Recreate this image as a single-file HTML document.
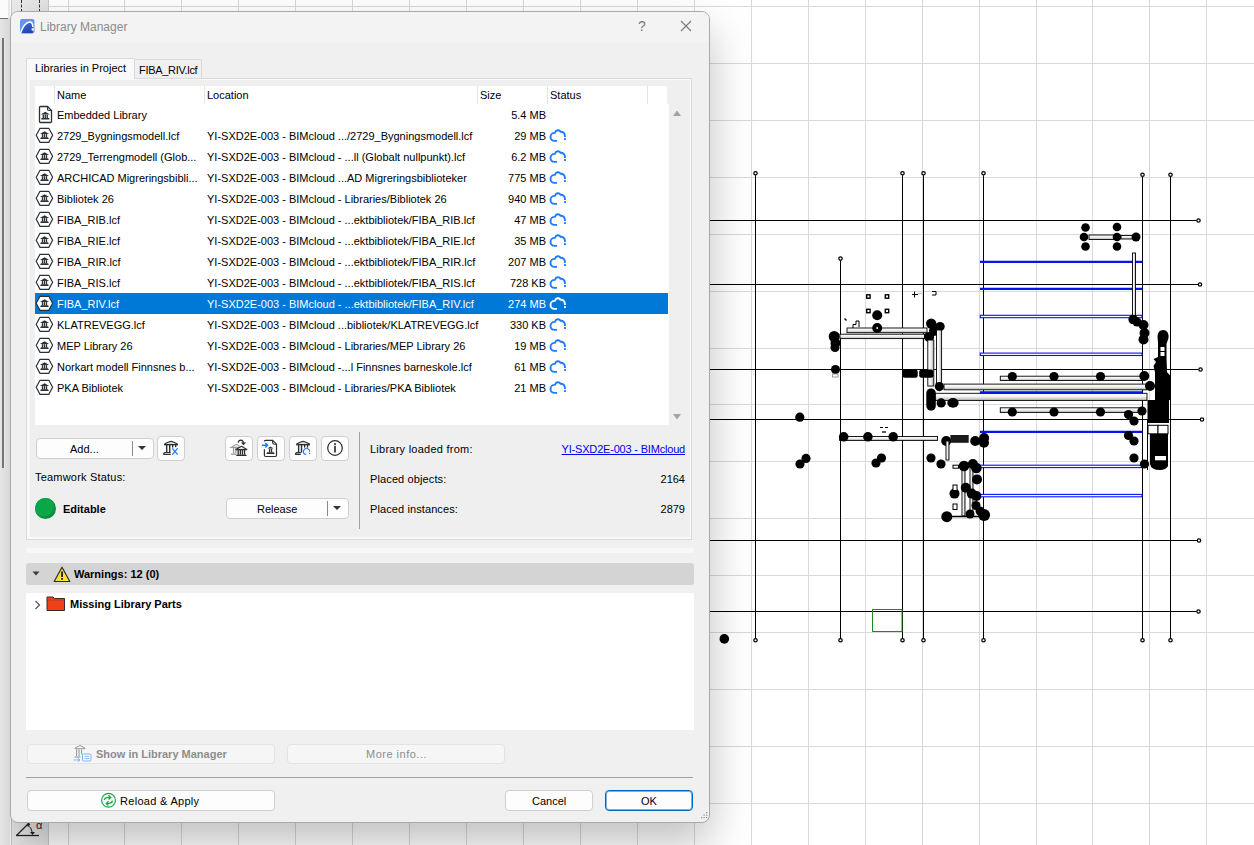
<!DOCTYPE html>
<html><head><meta charset="utf-8"><title>Library Manager</title>
<style>
html,body{margin:0;padding:0;}
body{width:1254px;height:845px;overflow:hidden;position:relative;background:#ffffff;font-family:"Liberation Sans",sans-serif;}
.a{position:absolute;}
.t{position:absolute;white-space:nowrap;font-size:11px;line-height:13px;color:#000;}
.b{font-weight:bold;}
.btn{position:absolute;box-sizing:border-box;border:1px solid #cfcfcf;border-radius:4px;background:#fdfdfd;}
</style></head><body>
<div class="a" style="left:0;top:0;width:10px;height:845px;background:linear-gradient(90deg,#e5e5e5 0,#d8d8d8 10px);z-index:5"></div><div class="a" style="left:2px;top:38px;width:2px;height:430px;background:#747474;box-shadow:1px 0 0 #e8e8e8;z-index:6"></div><div class="a" style="left:0;top:0;width:8px;height:18px;background:#fbfbfb;border-bottom:1px solid #707070;z-index:6"></div><div class="a" style="left:8px;top:0;width:2px;height:18px;background:#e8e8e8;z-index:6"></div><div class="a" style="left:11px;top:0;width:38px;height:845px;box-sizing:border-box;border-left:1px solid #c9c9c9;border-right:1px solid #c9c9c9;background:linear-gradient(90deg,#ececec,#e2e2e2)"></div><div class="a" style="left:21px;top:0;width:0;height:12px;border-left:1px dashed #333"></div><div class="a" style="left:39px;top:0;width:0;height:12px;border-left:1px dashed #333"></div><svg class="a" style="left:14px;top:818px" width="32" height="22" viewBox="0 0 32 22"><path d="M2 17.5 H25" stroke="#1e2328" stroke-width="1.3"/><path d="M2.5 17.5 L16 4" stroke="#1e2328" stroke-width="1.2"/><path d="M13.5 7 Q17.5 9 18.5 15" fill="none" stroke="#1e2328" stroke-width="1"/><path d="M13 5.5 L16.5 6.2 L13.8 9 Z" fill="#1e2328"/><path d="M16 14 H21 L18.5 17 Z" fill="#1e2328"/><text x="22" y="11" font-family="Liberation Sans" font-size="11" fill="#1e2328">&#945;</text></svg><svg class="a" style="left:49px;top:0" width="1205" height="845" viewBox="49 0 1205 845"><line x1="68.5" y1="0" x2="68.5" y2="845" stroke="#d9d9d9" stroke-width="1"/><line x1="124.5" y1="0" x2="124.5" y2="845" stroke="#d9d9d9" stroke-width="1"/><line x1="181.5" y1="0" x2="181.5" y2="845" stroke="#d9d9d9" stroke-width="1"/><line x1="238.5" y1="0" x2="238.5" y2="845" stroke="#d9d9d9" stroke-width="1"/><line x1="295.5" y1="0" x2="295.5" y2="845" stroke="#d9d9d9" stroke-width="1"/><line x1="352.5" y1="0" x2="352.5" y2="845" stroke="#d9d9d9" stroke-width="1"/><line x1="409.5" y1="0" x2="409.5" y2="845" stroke="#d9d9d9" stroke-width="1"/><line x1="466.5" y1="0" x2="466.5" y2="845" stroke="#d9d9d9" stroke-width="1"/><line x1="523.5" y1="0" x2="523.5" y2="845" stroke="#d9d9d9" stroke-width="1"/><line x1="580.5" y1="0" x2="580.5" y2="845" stroke="#d9d9d9" stroke-width="1"/><line x1="637.5" y1="0" x2="637.5" y2="845" stroke="#d9d9d9" stroke-width="1"/><line x1="694.5" y1="0" x2="694.5" y2="845" stroke="#d9d9d9" stroke-width="1"/><line x1="751.5" y1="0" x2="751.5" y2="845" stroke="#d9d9d9" stroke-width="1"/><line x1="808.5" y1="0" x2="808.5" y2="845" stroke="#d9d9d9" stroke-width="1"/><line x1="865.5" y1="0" x2="865.5" y2="845" stroke="#d9d9d9" stroke-width="1"/><line x1="922.5" y1="0" x2="922.5" y2="845" stroke="#d9d9d9" stroke-width="1"/><line x1="979.5" y1="0" x2="979.5" y2="845" stroke="#d9d9d9" stroke-width="1"/><line x1="1036.5" y1="0" x2="1036.5" y2="845" stroke="#d9d9d9" stroke-width="1"/><line x1="1092.5" y1="0" x2="1092.5" y2="845" stroke="#d9d9d9" stroke-width="1"/><line x1="1149.5" y1="0" x2="1149.5" y2="845" stroke="#d9d9d9" stroke-width="1"/><line x1="1206.5" y1="0" x2="1206.5" y2="845" stroke="#d9d9d9" stroke-width="1"/><line x1="49" y1="6.5" x2="1254" y2="6.5" stroke="#d9d9d9" stroke-width="1"/><line x1="49" y1="63.5" x2="1254" y2="63.5" stroke="#d9d9d9" stroke-width="1"/><line x1="49" y1="120.5" x2="1254" y2="120.5" stroke="#d9d9d9" stroke-width="1"/><line x1="49" y1="177.5" x2="1254" y2="177.5" stroke="#d9d9d9" stroke-width="1"/><line x1="49" y1="234.5" x2="1254" y2="234.5" stroke="#d9d9d9" stroke-width="1"/><line x1="49" y1="291.5" x2="1254" y2="291.5" stroke="#d9d9d9" stroke-width="1"/><line x1="49" y1="348.5" x2="1254" y2="348.5" stroke="#d9d9d9" stroke-width="1"/><line x1="49" y1="404.5" x2="1254" y2="404.5" stroke="#d9d9d9" stroke-width="1"/><line x1="49" y1="461.5" x2="1254" y2="461.5" stroke="#d9d9d9" stroke-width="1"/><line x1="49" y1="518.5" x2="1254" y2="518.5" stroke="#d9d9d9" stroke-width="1"/><line x1="49" y1="575.5" x2="1254" y2="575.5" stroke="#d9d9d9" stroke-width="1"/><line x1="49" y1="632.5" x2="1254" y2="632.5" stroke="#d9d9d9" stroke-width="1"/><line x1="49" y1="689.5" x2="1254" y2="689.5" stroke="#d9d9d9" stroke-width="1"/><line x1="49" y1="746.5" x2="1254" y2="746.5" stroke="#d9d9d9" stroke-width="1"/><line x1="49" y1="803.5" x2="1254" y2="803.5" stroke="#d9d9d9" stroke-width="1"/><defs><linearGradient id="wh" x1="0" y1="0" x2="0" y2="1"><stop offset="0" stop-color="#fff"/><stop offset="0.45" stop-color="#f4f4f4"/><stop offset="1" stop-color="#b4b4b4"/></linearGradient><linearGradient id="wv" x1="0" y1="0" x2="1" y2="0"><stop offset="0" stop-color="#fff"/><stop offset="0.45" stop-color="#f4f4f4"/><stop offset="1" stop-color="#b4b4b4"/></linearGradient></defs><line x1="710" y1="220.5" x2="1196.5" y2="220.5" stroke="#000" stroke-width="1.0"/><line x1="710" y1="284.5" x2="1198" y2="284.5" stroke="#000" stroke-width="1.0"/><line x1="710" y1="369.5" x2="1198.5" y2="369.5" stroke="#000" stroke-width="1.0"/><line x1="710" y1="419.5" x2="1200" y2="419.5" stroke="#000" stroke-width="1.0"/><line x1="710" y1="540.5" x2="1197" y2="540.5" stroke="#000" stroke-width="1.0"/><line x1="710" y1="611.5" x2="1196.5" y2="611.5" stroke="#000" stroke-width="1.0"/><line x1="755.5" y1="175.2" x2="755.5" y2="638.2" stroke="#000" stroke-width="1.0"/><line x1="840.5" y1="260.6" x2="840.5" y2="638.2" stroke="#000" stroke-width="1.0"/><line x1="902.5" y1="175.2" x2="902.5" y2="638.2" stroke="#000" stroke-width="1.0"/><line x1="923.5" y1="175.2" x2="923.5" y2="638.2" stroke="#000" stroke-width="1.0"/><line x1="983.5" y1="175.2" x2="983.5" y2="638.2" stroke="#000" stroke-width="1.0"/><line x1="1142.5" y1="176.7" x2="1142.5" y2="638.2" stroke="#000" stroke-width="1.0"/><line x1="1170.5" y1="176.7" x2="1170.5" y2="638.2" stroke="#000" stroke-width="1.0"/><line x1="980" y1="261.8" x2="1142.4" y2="261.8" stroke="#0814f0" stroke-width="2.2"/><line x1="980" y1="288.9" x2="1142.4" y2="288.9" stroke="#0814f0" stroke-width="2.2"/><line x1="980" y1="392.6" x2="1142.4" y2="392.6" stroke="#0814f0" stroke-width="2.2"/><line x1="980" y1="431.9" x2="1142.4" y2="431.9" stroke="#0814f0" stroke-width="2.2"/><rect x="980.3" y="315.3" width="161.70000000000005" height="2.3999999999999773" fill="#fff" stroke="#0814f0" stroke-width="1.1"/><rect x="980.3" y="353.1" width="161.70000000000005" height="2.3999999999999773" fill="#fff" stroke="#0814f0" stroke-width="1.1"/><rect x="980.3" y="465.2" width="161.70000000000005" height="2.3999999999999773" fill="#fff" stroke="#0814f0" stroke-width="1.1"/><rect x="980.3" y="494.40000000000003" width="161.70000000000005" height="2.3999999999999773" fill="#fff" stroke="#0814f0" stroke-width="1.1"/><rect x="872.5" y="609.5" width="29.5" height="22" fill="none" stroke="#1a8a1a" stroke-width="1"/><circle cx="724.3" cy="638.9" r="4.8" fill="#000"/><rect x="1089" y="235" width="25" height="4.5" fill="url(#wh)" stroke="#000" stroke-width="0.9"/><rect x="1121" y="235.5" width="12" height="3.5" fill="url(#wh)" stroke="#000" stroke-width="0.9"/><circle cx="1085.5" cy="227.5" r="4.3" fill="#000"/><circle cx="1084" cy="237" r="4.3" fill="#000"/><circle cx="1085.5" cy="246.5" r="4.3" fill="#000"/><circle cx="1117" cy="227" r="4.3" fill="#000"/><circle cx="1117" cy="237" r="4.3" fill="#000"/><circle cx="1117" cy="246.5" r="4.3" fill="#000"/><circle cx="1136" cy="237" r="4.5" fill="#000"/><rect x="1132.5" y="253" width="3.0" height="63" fill="url(#wv)" stroke="#000" stroke-width="0.9"/><rect x="866.6999999999999" y="294.8" width="3.4" height="3.4" fill="#fff" stroke="#000" stroke-width="1.4"/><rect x="885.3" y="294.8" width="3.4" height="3.4" fill="#fff" stroke="#000" stroke-width="1.4"/><rect x="866.6999999999999" y="309.3" width="3.4" height="3.4" fill="#fff" stroke="#000" stroke-width="1.4"/><rect x="885.3" y="309.3" width="3.4" height="3.4" fill="#fff" stroke="#000" stroke-width="1.4"/><line x1="912" y1="294.5" x2="918" y2="294.5" stroke="#000" stroke-width="1"/><line x1="914.5" y1="291.5" x2="914.5" y2="297.5" stroke="#000" stroke-width="1"/><line x1="918" y1="293.5" x2="922" y2="293.5" stroke="#e88" stroke-width="0.7"/><path d="M932 291.5 H936 V295 H932" fill="none" stroke="#000" stroke-width="1"/><line x1="844.5" y1="318.5" x2="846.5" y2="320.5" stroke="#000" stroke-width="1.2"/><path d="M853 328 V324.5 H856 V321 H859 V327" fill="none" stroke="#000" stroke-width="1"/><rect x="847" y="328" width="80" height="4.699999999999989" fill="url(#wh)" stroke="#000" stroke-width="0.9"/><rect x="840" y="334.2" width="84.5" height="4.400000000000034" fill="url(#wh)" stroke="#000" stroke-width="0.9"/><circle cx="877.2" cy="315.2" r="5" fill="#000"/><circle cx="877.2" cy="328" r="5" fill="#000"/><circle cx="877.2" cy="328" r="0.9" fill="#fff"/><circle cx="834.2" cy="336.5" r="5.5" fill="#000"/><circle cx="835.5" cy="343" r="5" fill="#000"/><circle cx="835" cy="347.5" r="4.5" fill="#000"/><circle cx="835.5" cy="369.5" r="4.5" fill="#000"/><rect x="832.5" y="374" width="5.5" height="3" fill="#fff" stroke="#888" stroke-width="0.8"/><circle cx="931.2" cy="323.6" r="5.2" fill="#000"/><circle cx="940.1" cy="326.6" r="4.6" fill="#000"/><circle cx="929.1" cy="336.9" r="5" fill="#000"/><circle cx="934" cy="331" r="5" fill="#000"/><rect x="927.8" y="340" width="6.0" height="46" fill="url(#wv)" stroke="#000" stroke-width="0.9"/><rect x="936.5" y="330" width="5.100000000000023" height="54" fill="url(#wv)" stroke="#000" stroke-width="0.9"/><rect x="902.5" y="369.5" width="15.200000000000045" height="8.199999999999989" rx="2.5" fill="#000"/><rect x="919.2" y="369.5" width="14.199999999999932" height="8.199999999999989" rx="2.5" fill="#000"/><rect x="1000.3" y="376.2" width="142.70000000000005" height="4.300000000000011" fill="url(#wh)" stroke="#000" stroke-width="0.9"/><rect x="944" y="384.1" width="203" height="5.699999999999989" fill="url(#wh)" stroke="#000" stroke-width="0.9"/><rect x="935" y="393.3" width="212" height="7.099999999999966" fill="url(#wh)" stroke="#000" stroke-width="0.9"/><rect x="1000.3" y="407.8" width="142.70000000000005" height="4.599999999999966" fill="url(#wh)" stroke="#000" stroke-width="0.9"/><circle cx="1012.3" cy="376.5" r="4.6" fill="#000"/><circle cx="1012.3" cy="412" r="4.6" fill="#000"/><circle cx="1054" cy="376.5" r="4.6" fill="#000"/><circle cx="1054" cy="412" r="4.6" fill="#000"/><circle cx="1100.5" cy="376.5" r="4.6" fill="#000"/><circle cx="1100.5" cy="412" r="4.6" fill="#000"/><circle cx="939.4" cy="386.6" r="4.6" fill="#000"/><rect x="926.3" y="388.4" width="9.5" height="22.30000000000001" rx="4.7" fill="#000"/><circle cx="941.2" cy="402.9" r="4.6" fill="#000"/><ellipse cx="953" cy="402.9" rx="5.7" ry="4.8" fill="#000"/><line x1="980" y1="392.6" x2="1142.4" y2="392.6" stroke="#0814f0" stroke-width="2.2"/><circle cx="799.8" cy="417.2" r="4.6" fill="#000"/><circle cx="800" cy="464" r="4.6" fill="#000"/><circle cx="806" cy="458.4" r="4.6" fill="#000"/><rect x="839.6" y="436.5" width="97.89999999999998" height="3.8999999999999773" fill="url(#wh)" stroke="#000" stroke-width="0.9"/><circle cx="843.7" cy="436.8" r="4.8" fill="#000"/><circle cx="867.9" cy="436.8" r="4.8" fill="#000"/><circle cx="893.2" cy="436.8" r="4.8" fill="#000"/><line x1="880" y1="427.5" x2="883" y2="427.5" stroke="#000" stroke-width="1"/><line x1="885" y1="427.5" x2="888" y2="427.5" stroke="#000" stroke-width="1"/><line x1="882" y1="432" x2="886" y2="432" stroke="#000" stroke-width="1.3"/><circle cx="876" cy="463" r="4.6" fill="#000"/><circle cx="881.5" cy="458" r="4.6" fill="#000"/><circle cx="931" cy="458" r="4.6" fill="#000"/><circle cx="941" cy="464" r="4.6" fill="#000"/><circle cx="946.2" cy="441" r="5" fill="#000"/><rect x="950.4" y="435" width="18.300000000000068" height="7.800000000000011" rx="0" fill="#1a1a1a"/><circle cx="975.2" cy="441" r="5" fill="#000"/><circle cx="984.1" cy="438" r="5" fill="#000"/><circle cx="984" cy="442.8" r="5" fill="#000"/><rect x="946" y="441" width="3" height="19" fill="url(#wv)" stroke="#000" stroke-width="0.9"/><rect x="962" y="466" width="3" height="50" fill="url(#wv)" stroke="#000" stroke-width="0.9"/><rect x="970" y="466" width="3" height="50" fill="url(#wv)" stroke="#000" stroke-width="0.9"/><circle cx="964" cy="466" r="5.3" fill="#000"/><circle cx="972.9" cy="464" r="5" fill="#000"/><circle cx="976.4" cy="468" r="5.3" fill="#000"/><circle cx="977" cy="479.4" r="5" fill="#000"/><circle cx="965.8" cy="487.7" r="5" fill="#000"/><circle cx="971.7" cy="493.6" r="5" fill="#000"/><circle cx="976.4" cy="496" r="5" fill="#000"/><circle cx="954.5" cy="493.6" r="5" fill="#000"/><circle cx="976" cy="505.5" r="4.5" fill="#000"/><circle cx="980" cy="511" r="4.5" fill="#000"/><circle cx="946.8" cy="516.7" r="5.5" fill="#000"/><circle cx="984.1" cy="515" r="6" fill="#000"/><circle cx="970" cy="514" r="4.5" fill="#000"/><rect x="953" y="465.2" width="5.5" height="3.0" fill="#fff" stroke="#000" stroke-width="1"/><rect x="953" y="485" width="4" height="5.5" fill="#fff" stroke="#000" stroke-width="1"/><rect x="953" y="504" width="4" height="5.5" fill="#fff" stroke="#000" stroke-width="1"/><line x1="949" y1="516.5" x2="984" y2="516.5" stroke="#000" stroke-width="1.5"/><circle cx="1133.2" cy="319.5" r="4.8" fill="#000"/><circle cx="1137" cy="322" r="4.5" fill="#000"/><circle cx="1143.5" cy="325" r="5" fill="#000"/><circle cx="1144.5" cy="333" r="5" fill="#000"/><circle cx="1143.5" cy="339.5" r="5" fill="#000"/><circle cx="1144.3" cy="376" r="5" fill="#000"/><circle cx="1150" cy="386" r="5" fill="#000"/><circle cx="1142" cy="411" r="4.6" fill="#000"/><path d="M1158 343 L1157.5 336 Q1158 330 1163 330 Q1169 330 1168.5 338 L1166.5 344 V357 L1167 372 L1170.5 376 V400 H1155 V372 L1153.5 366 L1156 362 L1153.5 359 L1158 357 Z" fill="#000"/><rect x="1160.5" y="347" width="4.0" height="4" rx="0" fill="#fff"/><rect x="1160.5" y="352" width="4.0" height="4" rx="0" fill="#fff"/><path d="M1147.5 400 H1169 V423 H1147.5 Z" fill="#000"/><rect x="1148" y="425.3" width="10" height="8.5" fill="#fff" stroke="#000" stroke-width="1"/><rect x="1158" y="425.3" width="10" height="8.5" fill="#fff" stroke="#000" stroke-width="1"/><path d="M1150 434 H1168 V466 Q1166 470 1160 470 Q1151 470 1150 464 Z" fill="#000"/><rect x="1155" y="456" width="11" height="4.300000000000011" rx="0" fill="#fff"/><circle cx="1128.5" cy="414.5" r="4.6" fill="#000"/><circle cx="1134" cy="421" r="4.6" fill="#000"/><circle cx="1128.5" cy="435.5" r="4.6" fill="#000"/><circle cx="1134" cy="441" r="4.6" fill="#000"/><circle cx="1134" cy="458" r="4.6" fill="#000"/><circle cx="1144.5" cy="464" r="4.6" fill="#000"/><line x1="1147.5" y1="420" x2="1147.5" y2="470" stroke="#000" stroke-width="1"/><circle cx="1198.5" cy="220.5" r="1.7" fill="#fff" stroke="#000" stroke-width="1.25"/><circle cx="1200" cy="284.5" r="1.7" fill="#fff" stroke="#000" stroke-width="1.25"/><circle cx="1200.5" cy="369.5" r="1.7" fill="#fff" stroke="#000" stroke-width="1.25"/><circle cx="1202" cy="419.5" r="1.7" fill="#fff" stroke="#000" stroke-width="1.25"/><circle cx="1199" cy="540.5" r="1.7" fill="#fff" stroke="#000" stroke-width="1.25"/><circle cx="1198.5" cy="611.5" r="1.7" fill="#fff" stroke="#000" stroke-width="1.25"/><circle cx="755.5" cy="173.2" r="1.7" fill="#fff" stroke="#000" stroke-width="1.25"/><circle cx="755.5" cy="640.2" r="1.7" fill="#fff" stroke="#000" stroke-width="1.25"/><circle cx="840.5" cy="258.6" r="1.7" fill="#fff" stroke="#000" stroke-width="1.25"/><circle cx="840.5" cy="640.2" r="1.7" fill="#fff" stroke="#000" stroke-width="1.25"/><circle cx="902.5" cy="173.2" r="1.7" fill="#fff" stroke="#000" stroke-width="1.25"/><circle cx="902.5" cy="640.2" r="1.7" fill="#fff" stroke="#000" stroke-width="1.25"/><circle cx="923.5" cy="173.2" r="1.7" fill="#fff" stroke="#000" stroke-width="1.25"/><circle cx="923.5" cy="640.2" r="1.7" fill="#fff" stroke="#000" stroke-width="1.25"/><circle cx="983.5" cy="173.2" r="1.7" fill="#fff" stroke="#000" stroke-width="1.25"/><circle cx="983.5" cy="640.2" r="1.7" fill="#fff" stroke="#000" stroke-width="1.25"/><circle cx="1142.5" cy="174.7" r="1.7" fill="#fff" stroke="#000" stroke-width="1.25"/><circle cx="1142.5" cy="640.2" r="1.7" fill="#fff" stroke="#000" stroke-width="1.25"/><circle cx="1170.5" cy="174.7" r="1.7" fill="#fff" stroke="#000" stroke-width="1.25"/><circle cx="1170.5" cy="640.2" r="1.7" fill="#fff" stroke="#000" stroke-width="1.25"/></svg><div class="a" style="left:10px;top:11px;width:698px;height:810px;border:1px solid #a9a9a9;border-radius:8px;background:#f0f0f0;box-shadow:0 20px 44px rgba(0,0,0,0.25);overflow:hidden"><div class="a" style="left:0;top:0;width:698px;height:30px;background:#f3f3f3"></div></div><svg class="a" style="left:20px;top:19px" width="15" height="15" viewBox="0 0 15 15"><defs><linearGradient id="lg" x1="0" y1="0" x2="0.4" y2="1"><stop offset="0" stop-color="#3f6fdc"/><stop offset="1" stop-color="#2446b4"/></linearGradient></defs><rect x="0" y="0" width="14.5" height="14.2" rx="2" fill="#6494f2"/><path d="M0.8 14.2 Q4 4 9.5 3 Q12.8 3 12.8 8.5 V14.2 H0.8 Z" fill="url(#lg)"/><path d="M0.6 14 Q4 4 9.5 3 Q12.8 3 12.8 8" fill="none" stroke="#fff" stroke-width="1.5"/><rect x="11.6" y="9.3" width="2.2" height="2.2" fill="#fff"/></svg><div class="t" style="left:40px;top:20px;font-size:12px;line-height:14px;color:#8b8b8b">Library Manager</div><div class="t" style="left:638px;top:18px;font-size:14px;line-height:16px;color:#7a7a7a">?</div><svg class="a" style="left:680px;top:20px" width="12" height="12" viewBox="0 0 12 12"><path d="M1 1 L11 11 M11 1 L1 11" stroke="#7b7b7b" stroke-width="1.1"/></svg><div class="a" style="left:26px;top:58px;width:109px;height:21px;box-sizing:border-box;border:1px solid #dadada;border-bottom:none;background:#f9f9f9;z-index:2"></div><div class="a" style="left:135px;top:59px;width:67px;height:19px;box-sizing:border-box;border:1px solid #dadada;border-left:none;border-bottom:none;background:#f0f0f0"></div><div class="t" style="left:35px;top:62px;z-index:3">Libraries in Project</div><div class="t" style="left:139px;top:64px;letter-spacing:-0.3px">FIBA_RIV.lcf</div><div class="a" style="left:26px;top:78px;width:666px;height:462px;box-sizing:border-box;border:1px solid #dadada;background:#efefef;box-shadow:inset 3px 1px 0 #f9f9f9, inset -1px -2px 0 #f9f9f9"></div><div class="a" style="left:35px;top:86px;width:634px;height:339px;background:#fff"></div><div class="a" style="left:667px;top:86px;width:2px;height:18px;background:#efefef"></div><div class="a" style="left:54px;top:86px;width:1px;height:18px;background:#e3e3e3"></div><div class="a" style="left:204px;top:86px;width:1px;height:18px;background:#e3e3e3"></div><div class="a" style="left:477px;top:86px;width:1px;height:18px;background:#e3e3e3"></div><div class="a" style="left:547px;top:86px;width:1px;height:18px;background:#e3e3e3"></div><div class="a" style="left:647px;top:86px;width:1px;height:18px;background:#e3e3e3"></div><div class="t" style="left:57px;top:89px">Name</div><div class="t" style="left:207px;top:89px">Location</div><div class="t" style="left:480px;top:89px">Size</div><div class="t" style="left:550px;top:89px">Status</div><svg class="a" style="left:672px;top:109px" width="10" height="8" viewBox="0 0 10 8"><path d="M1 7 L5 1.5 L9 7 Z" fill="#a3a3a3"/></svg><svg class="a" style="left:672px;top:413px" width="10" height="8" viewBox="0 0 10 8"><path d="M1 1 L5 6.5 L9 1 Z" fill="#a3a3a3"/></svg><svg style="position:absolute;left:38px;top:105px" width="16" height="19" viewBox="0 0 16 19"><path d="M1.5 2.5 Q1.5 1.5 2.5 1.5 H9.5 L13.5 5.5 V16.5 Q13.5 17.5 12.5 17.5 H2.5 Q1.5 17.5 1.5 16.5 Z" fill="none" stroke="#2b3034" stroke-width="1.3"/><path d="M9.5 1.5 V4 Q9.5 5.5 11 5.5 H13.5" fill="none" stroke="#2b3034" stroke-width="1.1"/><g transform="translate(3,6.8)"><path d="M-0.3 2.7 L4.3 0 L8.9 2.7 Z" fill="#2b3034"/><rect x="1.6" y="2.9" width="1.35" height="3.3" fill="#2b3034"/><rect x="3.6" y="2.9" width="1.35" height="3.3" fill="#2b3034"/><rect x="5.6" y="2.9" width="1.35" height="3.3" fill="#2b3034"/><path d="M0.7 6.1 H7.9 L8.6 7.7 H0 Z" fill="#2b3034"/></g></svg><div class="t" style="left:57px;top:109px;color:#000">Embedded Library</div><div class="t" style="right:708px;top:109px;color:#000">5.4 MB</div><svg style="position:absolute;left:35px;top:127px" width="19" height="17" viewBox="0 0 19 17"><path d="M1.2 8.3 L5 1.3 H13.8 L17.6 8.3 L13.8 15.3 H5 Z" fill="none" stroke="#2b3034" stroke-width="1.2"/><g transform="translate(5.2,4.2)"><path d="M-0.3 2.7 L4.3 0 L8.9 2.7 Z" fill="#2b3034"/><rect x="1.6" y="2.9" width="1.35" height="3.3" fill="#2b3034"/><rect x="3.6" y="2.9" width="1.35" height="3.3" fill="#2b3034"/><rect x="5.6" y="2.9" width="1.35" height="3.3" fill="#2b3034"/><path d="M0.7 6.1 H7.9 L8.6 7.7 H0 Z" fill="#2b3034"/></g></svg><div class="t" style="left:57px;top:130px;color:#000">2729_Bygningsmodell.lcf</div><div class="t" style="left:207px;top:130px;color:#000">YI-SXD2E-003 - BIMcloud .../2729_Bygningsmodell.lcf</div><div class="t" style="right:708px;top:130px;color:#000">29 MB</div><svg style="position:absolute;left:546px;top:126px" width="22" height="18" viewBox="0 0 22 18"><path d="M11 14.9 H8.5 A4 4 0 0 1 8.5 6.9 L9.1 6.6 A2.9 2.9 0 0 1 14.5 5.8 A3.9 3.9 0 0 1 18.9 9.8 V11" fill="none" stroke="#1f7aff" stroke-width="1.9"/><rect x="18" y="12.1" width="1.9" height="1.9" fill="#1f7aff"/></svg><svg style="position:absolute;left:35px;top:148px" width="19" height="17" viewBox="0 0 19 17"><path d="M1.2 8.3 L5 1.3 H13.8 L17.6 8.3 L13.8 15.3 H5 Z" fill="none" stroke="#2b3034" stroke-width="1.2"/><g transform="translate(5.2,4.2)"><path d="M-0.3 2.7 L4.3 0 L8.9 2.7 Z" fill="#2b3034"/><rect x="1.6" y="2.9" width="1.35" height="3.3" fill="#2b3034"/><rect x="3.6" y="2.9" width="1.35" height="3.3" fill="#2b3034"/><rect x="5.6" y="2.9" width="1.35" height="3.3" fill="#2b3034"/><path d="M0.7 6.1 H7.9 L8.6 7.7 H0 Z" fill="#2b3034"/></g></svg><div class="t" style="left:57px;top:151px;color:#000">2729_Terrengmodell (Glob...</div><div class="t" style="left:207px;top:151px;color:#000">YI-SXD2E-003 - BIMcloud - ...ll (Globalt nullpunkt).lcf</div><div class="t" style="right:708px;top:151px;color:#000">6.2 MB</div><svg style="position:absolute;left:546px;top:147px" width="22" height="18" viewBox="0 0 22 18"><path d="M11 14.9 H8.5 A4 4 0 0 1 8.5 6.9 L9.1 6.6 A2.9 2.9 0 0 1 14.5 5.8 A3.9 3.9 0 0 1 18.9 9.8 V11" fill="none" stroke="#1f7aff" stroke-width="1.9"/><rect x="18" y="12.1" width="1.9" height="1.9" fill="#1f7aff"/></svg><svg style="position:absolute;left:35px;top:169px" width="19" height="17" viewBox="0 0 19 17"><path d="M1.2 8.3 L5 1.3 H13.8 L17.6 8.3 L13.8 15.3 H5 Z" fill="none" stroke="#2b3034" stroke-width="1.2"/><g transform="translate(5.2,4.2)"><path d="M-0.3 2.7 L4.3 0 L8.9 2.7 Z" fill="#2b3034"/><rect x="1.6" y="2.9" width="1.35" height="3.3" fill="#2b3034"/><rect x="3.6" y="2.9" width="1.35" height="3.3" fill="#2b3034"/><rect x="5.6" y="2.9" width="1.35" height="3.3" fill="#2b3034"/><path d="M0.7 6.1 H7.9 L8.6 7.7 H0 Z" fill="#2b3034"/></g></svg><div class="t" style="left:57px;top:172px;color:#000">ARCHICAD Migreringsbibli...</div><div class="t" style="left:207px;top:172px;color:#000">YI-SXD2E-003 - BIMcloud ...AD Migreringsbiblioteker</div><div class="t" style="right:708px;top:172px;color:#000">775 MB</div><svg style="position:absolute;left:546px;top:168px" width="22" height="18" viewBox="0 0 22 18"><path d="M11 14.9 H8.5 A4 4 0 0 1 8.5 6.9 L9.1 6.6 A2.9 2.9 0 0 1 14.5 5.8 A3.9 3.9 0 0 1 18.9 9.8 V11" fill="none" stroke="#1f7aff" stroke-width="1.9"/><rect x="18" y="12.1" width="1.9" height="1.9" fill="#1f7aff"/></svg><svg style="position:absolute;left:35px;top:190px" width="19" height="17" viewBox="0 0 19 17"><path d="M1.2 8.3 L5 1.3 H13.8 L17.6 8.3 L13.8 15.3 H5 Z" fill="none" stroke="#2b3034" stroke-width="1.2"/><g transform="translate(5.2,4.2)"><path d="M-0.3 2.7 L4.3 0 L8.9 2.7 Z" fill="#2b3034"/><rect x="1.6" y="2.9" width="1.35" height="3.3" fill="#2b3034"/><rect x="3.6" y="2.9" width="1.35" height="3.3" fill="#2b3034"/><rect x="5.6" y="2.9" width="1.35" height="3.3" fill="#2b3034"/><path d="M0.7 6.1 H7.9 L8.6 7.7 H0 Z" fill="#2b3034"/></g></svg><div class="t" style="left:57px;top:193px;color:#000">Bibliotek 26</div><div class="t" style="left:207px;top:193px;color:#000">YI-SXD2E-003 - BIMcloud - Libraries/Bibliotek 26</div><div class="t" style="right:708px;top:193px;color:#000">940 MB</div><svg style="position:absolute;left:546px;top:189px" width="22" height="18" viewBox="0 0 22 18"><path d="M11 14.9 H8.5 A4 4 0 0 1 8.5 6.9 L9.1 6.6 A2.9 2.9 0 0 1 14.5 5.8 A3.9 3.9 0 0 1 18.9 9.8 V11" fill="none" stroke="#1f7aff" stroke-width="1.9"/><rect x="18" y="12.1" width="1.9" height="1.9" fill="#1f7aff"/></svg><svg style="position:absolute;left:35px;top:211px" width="19" height="17" viewBox="0 0 19 17"><path d="M1.2 8.3 L5 1.3 H13.8 L17.6 8.3 L13.8 15.3 H5 Z" fill="none" stroke="#2b3034" stroke-width="1.2"/><g transform="translate(5.2,4.2)"><path d="M-0.3 2.7 L4.3 0 L8.9 2.7 Z" fill="#2b3034"/><rect x="1.6" y="2.9" width="1.35" height="3.3" fill="#2b3034"/><rect x="3.6" y="2.9" width="1.35" height="3.3" fill="#2b3034"/><rect x="5.6" y="2.9" width="1.35" height="3.3" fill="#2b3034"/><path d="M0.7 6.1 H7.9 L8.6 7.7 H0 Z" fill="#2b3034"/></g></svg><div class="t" style="left:57px;top:214px;color:#000">FIBA_RIB.lcf</div><div class="t" style="left:207px;top:214px;color:#000">YI-SXD2E-003 - BIMcloud - ...ektbibliotek/FIBA_RIB.lcf</div><div class="t" style="right:708px;top:214px;color:#000">47 MB</div><svg style="position:absolute;left:546px;top:210px" width="22" height="18" viewBox="0 0 22 18"><path d="M11 14.9 H8.5 A4 4 0 0 1 8.5 6.9 L9.1 6.6 A2.9 2.9 0 0 1 14.5 5.8 A3.9 3.9 0 0 1 18.9 9.8 V11" fill="none" stroke="#1f7aff" stroke-width="1.9"/><rect x="18" y="12.1" width="1.9" height="1.9" fill="#1f7aff"/></svg><svg style="position:absolute;left:35px;top:232px" width="19" height="17" viewBox="0 0 19 17"><path d="M1.2 8.3 L5 1.3 H13.8 L17.6 8.3 L13.8 15.3 H5 Z" fill="none" stroke="#2b3034" stroke-width="1.2"/><g transform="translate(5.2,4.2)"><path d="M-0.3 2.7 L4.3 0 L8.9 2.7 Z" fill="#2b3034"/><rect x="1.6" y="2.9" width="1.35" height="3.3" fill="#2b3034"/><rect x="3.6" y="2.9" width="1.35" height="3.3" fill="#2b3034"/><rect x="5.6" y="2.9" width="1.35" height="3.3" fill="#2b3034"/><path d="M0.7 6.1 H7.9 L8.6 7.7 H0 Z" fill="#2b3034"/></g></svg><div class="t" style="left:57px;top:235px;color:#000">FIBA_RIE.lcf</div><div class="t" style="left:207px;top:235px;color:#000">YI-SXD2E-003 - BIMcloud - ...ektbibliotek/FIBA_RIE.lcf</div><div class="t" style="right:708px;top:235px;color:#000">35 MB</div><svg style="position:absolute;left:546px;top:231px" width="22" height="18" viewBox="0 0 22 18"><path d="M11 14.9 H8.5 A4 4 0 0 1 8.5 6.9 L9.1 6.6 A2.9 2.9 0 0 1 14.5 5.8 A3.9 3.9 0 0 1 18.9 9.8 V11" fill="none" stroke="#1f7aff" stroke-width="1.9"/><rect x="18" y="12.1" width="1.9" height="1.9" fill="#1f7aff"/></svg><svg style="position:absolute;left:35px;top:253px" width="19" height="17" viewBox="0 0 19 17"><path d="M1.2 8.3 L5 1.3 H13.8 L17.6 8.3 L13.8 15.3 H5 Z" fill="none" stroke="#2b3034" stroke-width="1.2"/><g transform="translate(5.2,4.2)"><path d="M-0.3 2.7 L4.3 0 L8.9 2.7 Z" fill="#2b3034"/><rect x="1.6" y="2.9" width="1.35" height="3.3" fill="#2b3034"/><rect x="3.6" y="2.9" width="1.35" height="3.3" fill="#2b3034"/><rect x="5.6" y="2.9" width="1.35" height="3.3" fill="#2b3034"/><path d="M0.7 6.1 H7.9 L8.6 7.7 H0 Z" fill="#2b3034"/></g></svg><div class="t" style="left:57px;top:256px;color:#000">FIBA_RIR.lcf</div><div class="t" style="left:207px;top:256px;color:#000">YI-SXD2E-003 - BIMcloud - ...ektbibliotek/FIBA_RIR.lcf</div><div class="t" style="right:708px;top:256px;color:#000">207 MB</div><svg style="position:absolute;left:546px;top:252px" width="22" height="18" viewBox="0 0 22 18"><path d="M11 14.9 H8.5 A4 4 0 0 1 8.5 6.9 L9.1 6.6 A2.9 2.9 0 0 1 14.5 5.8 A3.9 3.9 0 0 1 18.9 9.8 V11" fill="none" stroke="#1f7aff" stroke-width="1.9"/><rect x="18" y="12.1" width="1.9" height="1.9" fill="#1f7aff"/></svg><svg style="position:absolute;left:35px;top:274px" width="19" height="17" viewBox="0 0 19 17"><path d="M1.2 8.3 L5 1.3 H13.8 L17.6 8.3 L13.8 15.3 H5 Z" fill="none" stroke="#2b3034" stroke-width="1.2"/><g transform="translate(5.2,4.2)"><path d="M-0.3 2.7 L4.3 0 L8.9 2.7 Z" fill="#2b3034"/><rect x="1.6" y="2.9" width="1.35" height="3.3" fill="#2b3034"/><rect x="3.6" y="2.9" width="1.35" height="3.3" fill="#2b3034"/><rect x="5.6" y="2.9" width="1.35" height="3.3" fill="#2b3034"/><path d="M0.7 6.1 H7.9 L8.6 7.7 H0 Z" fill="#2b3034"/></g></svg><div class="t" style="left:57px;top:277px;color:#000">FIBA_RIS.lcf</div><div class="t" style="left:207px;top:277px;color:#000">YI-SXD2E-003 - BIMcloud - ...ektbibliotek/FIBA_RIS.lcf</div><div class="t" style="right:708px;top:277px;color:#000">728 KB</div><svg style="position:absolute;left:546px;top:273px" width="22" height="18" viewBox="0 0 22 18"><path d="M11 14.9 H8.5 A4 4 0 0 1 8.5 6.9 L9.1 6.6 A2.9 2.9 0 0 1 14.5 5.8 A3.9 3.9 0 0 1 18.9 9.8 V11" fill="none" stroke="#1f7aff" stroke-width="1.9"/><rect x="18" y="12.1" width="1.9" height="1.9" fill="#1f7aff"/></svg><div class="a" style="left:35px;top:293px;width:633px;height:21px;background:#0078d7"></div><svg style="position:absolute;left:35px;top:295px" width="19" height="17" viewBox="0 0 19 17"><path d="M1.2 8.3 L5 1.3 H13.8 L17.6 8.3 L13.8 15.3 H5 Z" fill="#ffffff" stroke="#2b3034" stroke-width="1.2"/><g transform="translate(5.2,4.2)"><path d="M-0.3 2.7 L4.3 0 L8.9 2.7 Z" fill="#2b3034"/><rect x="1.6" y="2.9" width="1.35" height="3.3" fill="#2b3034"/><rect x="3.6" y="2.9" width="1.35" height="3.3" fill="#2b3034"/><rect x="5.6" y="2.9" width="1.35" height="3.3" fill="#2b3034"/><path d="M0.7 6.1 H7.9 L8.6 7.7 H0 Z" fill="#2b3034"/></g></svg><div class="t" style="left:57px;top:298px;color:#fff">FIBA_RIV.lcf</div><div class="t" style="left:207px;top:298px;color:#fff">YI-SXD2E-003 - BIMcloud - ...ektbibliotek/FIBA_RIV.lcf</div><div class="t" style="right:708px;top:298px;color:#fff">274 MB</div><svg style="position:absolute;left:546px;top:294px" width="22" height="18" viewBox="0 0 22 18"><path d="M11 14.9 H8.5 A4 4 0 0 1 8.5 6.9 L9.1 6.6 A2.9 2.9 0 0 1 14.5 5.8 A3.9 3.9 0 0 1 18.9 9.8 V11" fill="none" stroke="#ffffff" stroke-width="1.9"/><rect x="18" y="12.1" width="1.9" height="1.9" fill="#ffffff"/></svg><svg style="position:absolute;left:35px;top:316px" width="19" height="17" viewBox="0 0 19 17"><path d="M1.2 8.3 L5 1.3 H13.8 L17.6 8.3 L13.8 15.3 H5 Z" fill="none" stroke="#2b3034" stroke-width="1.2"/><g transform="translate(5.2,4.2)"><path d="M-0.3 2.7 L4.3 0 L8.9 2.7 Z" fill="#2b3034"/><rect x="1.6" y="2.9" width="1.35" height="3.3" fill="#2b3034"/><rect x="3.6" y="2.9" width="1.35" height="3.3" fill="#2b3034"/><rect x="5.6" y="2.9" width="1.35" height="3.3" fill="#2b3034"/><path d="M0.7 6.1 H7.9 L8.6 7.7 H0 Z" fill="#2b3034"/></g></svg><div class="t" style="left:57px;top:319px;color:#000">KLATREVEGG.lcf</div><div class="t" style="left:207px;top:319px;color:#000">YI-SXD2E-003 - BIMcloud ...bibliotek/KLATREVEGG.lcf</div><div class="t" style="right:708px;top:319px;color:#000">330 KB</div><svg style="position:absolute;left:546px;top:315px" width="22" height="18" viewBox="0 0 22 18"><path d="M11 14.9 H8.5 A4 4 0 0 1 8.5 6.9 L9.1 6.6 A2.9 2.9 0 0 1 14.5 5.8 A3.9 3.9 0 0 1 18.9 9.8 V11" fill="none" stroke="#1f7aff" stroke-width="1.9"/><rect x="18" y="12.1" width="1.9" height="1.9" fill="#1f7aff"/></svg><svg style="position:absolute;left:35px;top:337px" width="19" height="17" viewBox="0 0 19 17"><path d="M1.2 8.3 L5 1.3 H13.8 L17.6 8.3 L13.8 15.3 H5 Z" fill="none" stroke="#2b3034" stroke-width="1.2"/><g transform="translate(5.2,4.2)"><path d="M-0.3 2.7 L4.3 0 L8.9 2.7 Z" fill="#2b3034"/><rect x="1.6" y="2.9" width="1.35" height="3.3" fill="#2b3034"/><rect x="3.6" y="2.9" width="1.35" height="3.3" fill="#2b3034"/><rect x="5.6" y="2.9" width="1.35" height="3.3" fill="#2b3034"/><path d="M0.7 6.1 H7.9 L8.6 7.7 H0 Z" fill="#2b3034"/></g></svg><div class="t" style="left:57px;top:340px;color:#000">MEP Library 26</div><div class="t" style="left:207px;top:340px;color:#000">YI-SXD2E-003 - BIMcloud - Libraries/MEP Library 26</div><div class="t" style="right:708px;top:340px;color:#000">19 MB</div><svg style="position:absolute;left:546px;top:336px" width="22" height="18" viewBox="0 0 22 18"><path d="M11 14.9 H8.5 A4 4 0 0 1 8.5 6.9 L9.1 6.6 A2.9 2.9 0 0 1 14.5 5.8 A3.9 3.9 0 0 1 18.9 9.8 V11" fill="none" stroke="#1f7aff" stroke-width="1.9"/><rect x="18" y="12.1" width="1.9" height="1.9" fill="#1f7aff"/></svg><svg style="position:absolute;left:35px;top:358px" width="19" height="17" viewBox="0 0 19 17"><path d="M1.2 8.3 L5 1.3 H13.8 L17.6 8.3 L13.8 15.3 H5 Z" fill="none" stroke="#2b3034" stroke-width="1.2"/><g transform="translate(5.2,4.2)"><path d="M-0.3 2.7 L4.3 0 L8.9 2.7 Z" fill="#2b3034"/><rect x="1.6" y="2.9" width="1.35" height="3.3" fill="#2b3034"/><rect x="3.6" y="2.9" width="1.35" height="3.3" fill="#2b3034"/><rect x="5.6" y="2.9" width="1.35" height="3.3" fill="#2b3034"/><path d="M0.7 6.1 H7.9 L8.6 7.7 H0 Z" fill="#2b3034"/></g></svg><div class="t" style="left:57px;top:361px;color:#000">Norkart modell Finnsnes b...</div><div class="t" style="left:207px;top:361px;color:#000">YI-SXD2E-003 - BIMcloud -...l Finnsnes barneskole.lcf</div><div class="t" style="right:708px;top:361px;color:#000">61 MB</div><svg style="position:absolute;left:546px;top:357px" width="22" height="18" viewBox="0 0 22 18"><path d="M11 14.9 H8.5 A4 4 0 0 1 8.5 6.9 L9.1 6.6 A2.9 2.9 0 0 1 14.5 5.8 A3.9 3.9 0 0 1 18.9 9.8 V11" fill="none" stroke="#1f7aff" stroke-width="1.9"/><rect x="18" y="12.1" width="1.9" height="1.9" fill="#1f7aff"/></svg><svg style="position:absolute;left:35px;top:379px" width="19" height="17" viewBox="0 0 19 17"><path d="M1.2 8.3 L5 1.3 H13.8 L17.6 8.3 L13.8 15.3 H5 Z" fill="none" stroke="#2b3034" stroke-width="1.2"/><g transform="translate(5.2,4.2)"><path d="M-0.3 2.7 L4.3 0 L8.9 2.7 Z" fill="#2b3034"/><rect x="1.6" y="2.9" width="1.35" height="3.3" fill="#2b3034"/><rect x="3.6" y="2.9" width="1.35" height="3.3" fill="#2b3034"/><rect x="5.6" y="2.9" width="1.35" height="3.3" fill="#2b3034"/><path d="M0.7 6.1 H7.9 L8.6 7.7 H0 Z" fill="#2b3034"/></g></svg><div class="t" style="left:57px;top:382px;color:#000">PKA Bibliotek</div><div class="t" style="left:207px;top:382px;color:#000">YI-SXD2E-003 - BIMcloud - Libraries/PKA Bibliotek</div><div class="t" style="right:708px;top:382px;color:#000">21 MB</div><svg style="position:absolute;left:546px;top:378px" width="22" height="18" viewBox="0 0 22 18"><path d="M11 14.9 H8.5 A4 4 0 0 1 8.5 6.9 L9.1 6.6 A2.9 2.9 0 0 1 14.5 5.8 A3.9 3.9 0 0 1 18.9 9.8 V11" fill="none" stroke="#1f7aff" stroke-width="1.9"/><rect x="18" y="12.1" width="1.9" height="1.9" fill="#1f7aff"/></svg><div class="btn" style="left:36px;top:438px;width:118px;height:21px"></div><div class="a" style="left:132px;top:441px;width:1px;height:15px;background:#8a8a8a"></div><svg class="a" style="left:137px;top:445px" width="10" height="6" viewBox="0 0 10 6"><path d="M1 1 H9 L5 5 Z" fill="#333"/></svg><div class="t" style="left:70px;top:443px">Add...</div><div class="btn" style="left:157px;top:436px;width:28px;height:25px"></div><svg class="a" style="left:155px;top:434px" width="32" height="28" viewBox="0 0 32 28"><path d="M9.3 10.4 Q12 8.2 16 7.4 Q20 8.2 22.7 10.4" fill="none" stroke="#2b3034" stroke-width="1.2"/><path d="M9 10.6 H23" stroke="#2b3034" stroke-width="1.5"/><rect x="11" y="10.6" width="1.4" height="7.8" fill="#2b3034"/><rect x="14" y="10.6" width="1.4" height="7.8" fill="#2b3034"/><rect x="17" y="10.6" width="1.3" height="3" fill="#2b3034"/><rect x="20" y="10.6" width="1.3" height="2.6" fill="#2b3034"/><path d="M9.3 18.5 H15.7 M8.3 20.4 H15.8 M8.3 20.4 L9.5 18.5" fill="none" stroke="#2b3034" stroke-width="1.2"/><path d="M17.3 14.3 L22.6 20.6 M22.6 14.3 L17.3 20.6" stroke="#1f7aff" stroke-width="1.3"/></svg><div class="btn" style="left:225px;top:436px;width:28px;height:25px"></div><div class="btn" style="left:257px;top:436px;width:28px;height:25px"></div><div class="btn" style="left:289px;top:436px;width:28px;height:25px"></div><div class="btn" style="left:321px;top:436px;width:28px;height:25px"></div><svg class="a" style="left:223px;top:434px" width="32" height="28" viewBox="0 0 32 28"><path d="M8 13.4 L13.4 10.3 L15.8 11.6 V13.4 Z" fill="none" stroke="#9a9a9a" stroke-width="1.1"/><rect x="9.9" y="13.4" width="1.3" height="6" fill="#9a9a9a"/><rect x="12.2" y="13.4" width="1.3" height="6" fill="#9a9a9a"/><path d="M8 20.2 H13.5" stroke="#9a9a9a" stroke-width="1.3"/><path d="M13 15.5 L18.5 12.3 L23.8 15.5 Z" fill="#fff" stroke="#2b3034" stroke-width="1.2" stroke-linejoin="round"/><path d="M13 15.6 H23.8" stroke="#2b3034" stroke-width="1.4"/><rect x="14.6" y="15.6" width="1.3" height="5" fill="#2b3034"/><rect x="16.7" y="15.6" width="1.3" height="5" fill="#2b3034"/><rect x="18.8" y="15.6" width="1.3" height="5" fill="#2b3034"/><rect x="20.9" y="15.6" width="1.3" height="5" fill="#2b3034"/><path d="M13.8 20.5 H23 L23.8 21.9 H13 Z" fill="#2b3034"/><path d="M15.2 8.7 Q15.5 6.2 18 6.2 Q20.5 6.4 20.5 9.8" fill="none" stroke="#2b3034" stroke-width="1.2"/><path d="M18.7 8.4 L20.5 10.4 L22.4 8.4" fill="none" stroke="#2b3034" stroke-width="1.3"/></svg><svg class="a" style="left:255px;top:434px" width="32" height="28" viewBox="0 0 32 28"><path d="M9.4 7.6 Q9.4 6.3 10.6 6.3 H17.6 L21.5 10.2 V21.3 Q21.5 22.5 20.3 22.5 H10.6 Q9.4 22.5 9.4 21.3 V15.2" fill="none" stroke="#2b3034" stroke-width="1.2"/><path d="M17.6 6.3 V8.6 Q17.6 10.2 19.2 10.2 H21.5" fill="none" stroke="#2b3034" stroke-width="1.1"/><g transform="translate(11.3,12.2)"><path d="M1.1 2.3 L4.1 0.2 L7.3 2.3 Z" fill="#2b3034"/><rect x="2.6" y="2.6" width="1.3" height="3.4" fill="#2b3034"/><rect x="4.6" y="2.6" width="1.3" height="3.4" fill="#2b3034"/><path d="M0.9 6 H7.6 L8.4 7.7 H0 Z" fill="#2b3034"/></g><path d="M7 11.3 H12.5 M10.3 9.1 L12.6 11.3 L10.3 13.5" fill="none" stroke="#1f7aff" stroke-width="1.4"/></svg><svg class="a" style="left:287px;top:434px" width="32" height="28" viewBox="0 0 32 28"><path d="M9.5 10.3 Q12 8.2 16 7.4 Q20 8.2 22.7 10.3" fill="none" stroke="#2b3034" stroke-width="1.2"/><path d="M9.2 10.6 H23" stroke="#2b3034" stroke-width="1.5"/><rect x="10.9" y="10.6" width="1.4" height="8" fill="#2b3034"/><rect x="13.8" y="10.6" width="1.4" height="8" fill="#2b3034"/><rect x="17" y="10.6" width="1.3" height="3" fill="#2b3034"/><rect x="19.9" y="10.6" width="1.3" height="3" fill="#2b3034"/><path d="M9.2 18.7 H13.8 M8.1 20.4 H13.8 M8.1 20.4 L9.4 18.7" fill="none" stroke="#2b3034" stroke-width="1.2"/><path d="M19.2 20.3 H18.5 A2.6 2.6 0 0 1 17.4 15.6 A2.2 2.2 0 0 1 21.3 15.3 A2 2 0 0 1 22.6 17.3 V17.8" fill="none" stroke="#1f7aff" stroke-width="1.2"/><rect x="22" y="18.8" width="1.2" height="1.2" fill="#1f7aff"/></svg><svg class="a" style="left:319px;top:434px" width="32" height="28" viewBox="0 0 32 28"><circle cx="16" cy="14" r="7.3" fill="none" stroke="#2b3034" stroke-width="1.2"/><rect x="15.15" y="11.8" width="1.7" height="6.7" fill="#2b3034"/><rect x="15.1" y="9.1" width="1.8" height="1.8" rx="0.4" fill="#2b3034"/></svg><div class="t" style="left:35px;top:471px;letter-spacing:0.2px">Teamwork Status:</div><svg class="a" style="left:34px;top:497px" width="23" height="23" viewBox="0 0 23 23"><defs><clipPath id="gc"><circle cx="11.5" cy="11.5" r="10.5"/></clipPath></defs><circle cx="11.5" cy="11.5" r="10.5" fill="#08903b"/><circle cx="9.6" cy="9.4" r="10.1" fill="#0aa648" clip-path="url(#gc)"/></svg><div class="t b" style="left:63px;top:503px">Editable</div><div class="btn" style="left:226px;top:498px;width:123px;height:21px"></div><div class="a" style="left:327px;top:501px;width:1px;height:15px;background:#8a8a8a"></div><svg class="a" style="left:332px;top:505px" width="10" height="6" viewBox="0 0 10 6"><path d="M1 1 H9 L5 5 Z" fill="#333"/></svg><div class="t" style="left:257px;top:503px">Release</div><div class="a" style="left:359px;top:432px;width:1px;height:97px;background:#a0a0a0"></div><div class="t" style="left:370px;top:443px;letter-spacing:0.25px">Library loaded from:</div><div class="t" style="right:569px;top:443px;color:#0000ee;text-decoration:underline;letter-spacing:-0.19px">YI-SXD2E-003 - BIMcloud</div><div class="t" style="left:370px;top:473px;letter-spacing:0.12px">Placed objects:</div><div class="t" style="right:569px;top:473px">2164</div><div class="t" style="left:370px;top:503px;letter-spacing:0.1px">Placed instances:</div><div class="t" style="right:569px;top:503px">2879</div><div class="a" style="left:26px;top:548px;width:668px;height:5px;background:#f7f7f7"></div><div class="a" style="left:26px;top:563px;width:668px;height:22px;background:#d4d4d4;border-radius:3px"></div><svg class="a" style="left:31px;top:570px" width="10" height="7" viewBox="0 0 10 7"><path d="M1.5 1.5 H8.5 L5 5.5 Z" fill="#3a3a3a"/></svg><svg class="a" style="left:53px;top:566px" width="18" height="17" viewBox="0 0 18 17"><path d="M9 1.2 L16.8 15.5 H1.2 Z" fill="#ffe22e" stroke="#2b2b2b" stroke-width="1.2" stroke-linejoin="round"/><rect x="8.2" y="5.5" width="1.7" height="5.5" fill="#111"/><rect x="8.2" y="12" width="1.7" height="1.7" fill="#111"/></svg><div class="t b" style="left:74px;top:568px">Warnings: 12 (0)</div><div class="a" style="left:26px;top:593px;width:668px;height:137px;background:#fff"></div><svg class="a" style="left:33px;top:599px" width="9" height="12" viewBox="0 0 9 12"><path d="M2.5 2 L6.5 6 L2.5 10" fill="none" stroke="#555" stroke-width="1.2"/></svg><svg class="a" style="left:46px;top:595px" width="20" height="17" viewBox="0 0 20 17"><path d="M1 2 H7 L8.5 3.5 H18.5 V15.5 H1 Z" fill="#f0401a" stroke="#3a2a25" stroke-width="1"/><path d="M1 5 H18.5" stroke="#3a2a25" stroke-width="0.6" opacity="0.4"/></svg><div class="t b" style="left:70px;top:598px">Missing Library Parts</div><div class="btn" style="left:27px;top:744px;width:248px;height:20px;border-color:#e3e3e3;background:#f6f6f6"></div><svg class="a" style="left:73px;top:744px" width="20" height="19" viewBox="0 0 20 19" opacity="0.55"><path d="M2 4 L7 1.5 L12 4 V4.7 H2 Z" fill="none" stroke="#555" stroke-width="1"/><rect x="3" y="5.3" width="1.1" height="7" fill="#555"/><rect x="5.5" y="5.3" width="1.1" height="7" fill="#555"/><rect x="8" y="5.3" width="1.1" height="5" fill="#555"/><rect x="1.5" y="12.5" width="6" height="1.1" fill="#555"/><rect x="9.5" y="10" width="8.5" height="7" rx="1" fill="#fff" stroke="#1f7aff" stroke-width="1"/><path d="M11.5 12.3 H16 M11.5 14.6 H16" stroke="#1f7aff" stroke-width="0.9"/><path d="M0.5 16 H7 M5 14 L7 16 L5 18" fill="none" stroke="#1f7aff" stroke-width="1"/></svg><div class="t b" style="left:96px;top:748px;color:#8d8d8d">Show in Library Manager</div><div class="btn" style="left:287px;top:744px;width:218px;height:20px;border-color:#e3e3e3;background:#f6f6f6"></div><div class="t" style="left:366px;top:748px;color:#8d8d8d;letter-spacing:0.5px">More info...</div><div class="a" style="left:26px;top:777px;width:667px;height:1px;background:#a0a0a0"></div><div class="btn" style="left:27px;top:790px;width:248px;height:21px"></div><svg class="a" style="left:98px;top:790px" width="22" height="22" viewBox="0 0 22 22"><circle cx="10.55" cy="10.3" r="6.9" fill="none" stroke="#14a84a" stroke-width="1.2"/><path d="M6.3 10 Q6.8 7.4 10.5 7.4 H12.3" fill="none" stroke="#14a84a" stroke-width="1.3"/><path d="M10.5 5.3 L12.7 7.4 L10.5 9.5" fill="none" stroke="#14a84a" stroke-width="1.3"/><path d="M14.5 10.6 Q14 13.3 10.5 13.4 H8.7" fill="none" stroke="#14a84a" stroke-width="1.3"/><path d="M10.5 11.3 L8.3 13.4 L10.5 15.5" fill="none" stroke="#14a84a" stroke-width="1.3"/></svg><div class="t" style="left:120px;top:795px;letter-spacing:0.3px">Reload &amp; Apply</div><div class="btn" style="left:505px;top:790px;width:88px;height:21px"></div><div class="t" style="left:532px;top:795px">Cancel</div><div class="btn" style="left:605px;top:790px;width:88px;height:21px;border:1px solid #0067c0;box-shadow:inset 0 0 0 1px rgba(0,103,192,0.5)"></div><div class="t" style="left:641px;top:795px">OK</div><svg class="a" style="left:699px;top:811px" width="10" height="10" viewBox="0 0 10 10"><g fill="#8c8c8c"><rect x="7" y="1" width="1.2" height="1.2"/><rect x="4.5" y="3.5" width="1.2" height="1.2"/><rect x="7" y="3.5" width="1.2" height="1.2"/><rect x="2" y="6" width="1.2" height="1.2"/><rect x="4.5" y="6" width="1.2" height="1.2"/><rect x="7" y="6" width="1.2" height="1.2"/></g></svg></body></html>
